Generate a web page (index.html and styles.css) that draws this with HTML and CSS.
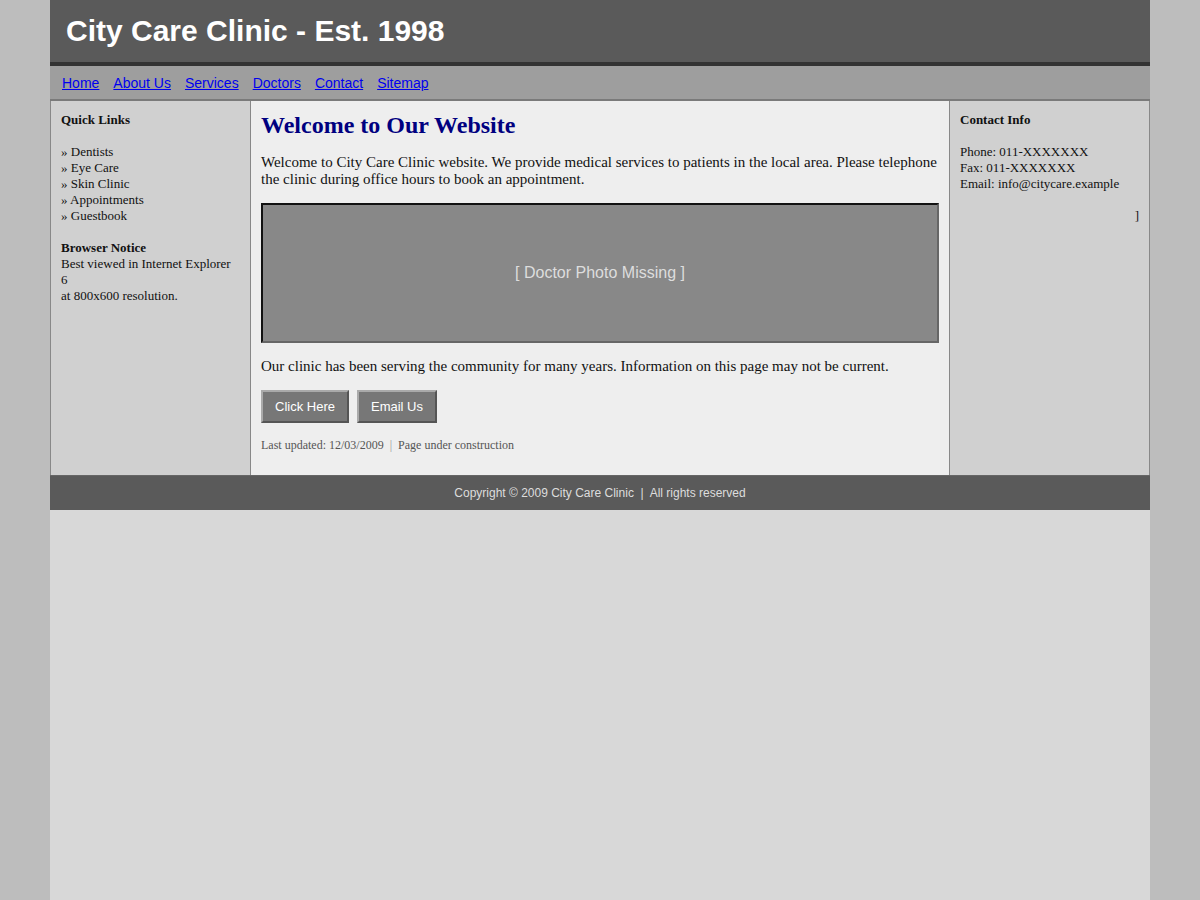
FILE: index.html
```html
<!DOCTYPE html>
<html lang="en">
<head>
    <meta charset="UTF-8">
    <title>City Care Clinic - Est. 1998</title>
    <link rel="stylesheet" href="styles.css">
</head>
<body>
    <div class="page">
        <div class="header">
            <h1 class="site-title">City Care Clinic - Est. 1998</h1>
        </div>

        <div class="nav">
            <a href="#">Home</a>
            <a href="#">About Us</a>
            <a href="#">Services</a>
            <a href="#">Doctors</a>
            <a href="#">Contact</a>
            <a href="#">Sitemap</a>
        </div>

        <div class="columns">
            <div class="side side-left">
                <h3 class="side-title">Quick Links</h3>
                <div class="side-block">
                    &raquo; Dentists<br>
                    &raquo; Eye Care<br>
                    &raquo; Skin Clinic<br>
                    &raquo; Appointments<br>
                    &raquo; Guestbook
                </div>
                <div class="side-block">
                    <b>Browser Notice</b><br>
                    Best viewed in Internet Explorer 6<br>
                    at 800x600 resolution.
                </div>
            </div>

            <div class="main">
                <h2 class="main-title">Welcome to Our Website</h2>
                <p class="main-text">Welcome to City Care Clinic website. We provide medical services to patients in the local area. Please telephone the clinic during office hours to book an appointment.</p>

                <div class="photo">[ Doctor Photo Missing ]</div>

                <p class="main-text">Our clinic has been serving the community for many years. Information on this page may not be current.</p>

                <div class="buttons">
                    <button class="btn">Click Here</button>
                    <button class="btn">Email Us</button>
                </div>

                <p class="updated">Last updated: 12/03/2009 <span class="sep">|</span> Page under construction</p>
            </div>

            <div class="side side-right">
                <h3 class="side-title">Contact Info</h3>
                <div class="side-block">
                    Phone: 011-XXXXXXX<br>
                    Fax: 011-XXXXXXX<br>
                    Email: info@citycare.example
                </div>
                <div class="stray">]</div>
            </div>
        </div>

        <div class="footer">
            Copyright &copy; 2009 City Care Clinic &nbsp;|&nbsp; All rights reserved
        </div>
    </div>
</body>
</html>
```

FILE: styles.css
```css
body {
    margin: 0;
    background-color: #bdbdbd;
    font-family: "Liberation Serif", "Times New Roman", serif;
}

.page {
    width: 1100px;
    min-height: 100vh;
    margin: 0 auto;
    background-color: #d8d8d8;
}

/* header */
.header {
    height: 62px;
    background-color: #5a5a5a;
    border-bottom: 4px solid #333333;
    padding-left: 16px;
    display: flex;
    align-items: center;
}

.site-title {
    margin: 0;
    font-family: "Liberation Sans", Arial, sans-serif;
    font-size: 30px;
    font-weight: bold;
    color: #ffffff;
}

/* nav */
.nav {
    height: 33px;
    background-color: #9e9e9e;
    border-bottom: 2px solid #7a7a7a;
    padding: 0 12px;
    display: flex;
    align-items: center;
    gap: 14px;
}

.nav a {
    font-family: "Liberation Sans", Arial, sans-serif;
    font-size: 14px;
    color: #0000ee;
    text-decoration: underline;
}

/* columns */
.columns {
    display: flex;
    align-items: stretch;
}

.side {
    width: 179px;
    background-color: #d0d0d0;
    border-left: 1px solid #888888;
    border-right: 1px solid #888888;
    padding: 11px 10px 10px 10px;
    font-size: 13px;
    line-height: 16px;
    color: #111111;
}

.side-title {
    margin: 0 0 16px 0;
    font-size: 13px;
    font-weight: bold;
}

.side-block {
    margin-bottom: 16px;
}

.side-left .side-block:last-child {
    width: 172px;
}

.stray {
    text-align: right;
}

.main {
    flex: 1;
    background-color: #eeeeee;
    padding: 10px 10px 10px 10px;
    color: #111111;
}

.main-title {
    margin: 0 0 15px 0;
    font-size: 24px;
    line-height: 28px;
    font-weight: bold;
    color: #000080;
}

.main-text {
    margin: 0 0 15px 0;
    font-size: 15px;
    line-height: 17px;
}

.photo {
    height: 136px;
    background-color: #888888;
    border-top: 2px solid #111111;
    border-left: 2px solid #111111;
    border-bottom: 2px solid #666666;
    border-right: 2px solid #666666;
    margin-bottom: 15px;
    display: flex;
    align-items: center;
    justify-content: center;
    font-family: "Liberation Sans", Arial, sans-serif;
    font-size: 16px;
    color: #dddddd;
}

.buttons {
    display: flex;
    gap: 8px;
    margin-top: 15px;
}

.btn {
    font-family: "Liberation Sans", Arial, sans-serif;
    font-size: 13px;
    line-height: 17px;
    color: #ffffff;
    background-color: #777777;
    border-top: 2px solid #aaaaaa;
    border-left: 2px solid #aaaaaa;
    border-bottom: 2px solid #555555;
    border-right: 2px solid #555555;
    padding: 6px 12px;
    margin: 0;
}

.updated {
    margin: 14px 0 0 0;
    font-size: 12px;
    line-height: 16px;
    color: #555555;
    padding-bottom: 12px;
}

.sep {
    color: #999999;
    margin: 0 3px;
}

/* footer */
.footer {
    height: 35px;
    background-color: #5a5a5a;
    border-top: 1px solid #666666;
    box-sizing: border-box;
    display: flex;
    align-items: center;
    justify-content: center;
    font-family: "Liberation Sans", Arial, sans-serif;
    font-size: 12px;
    color: #dddddd;
}
```
